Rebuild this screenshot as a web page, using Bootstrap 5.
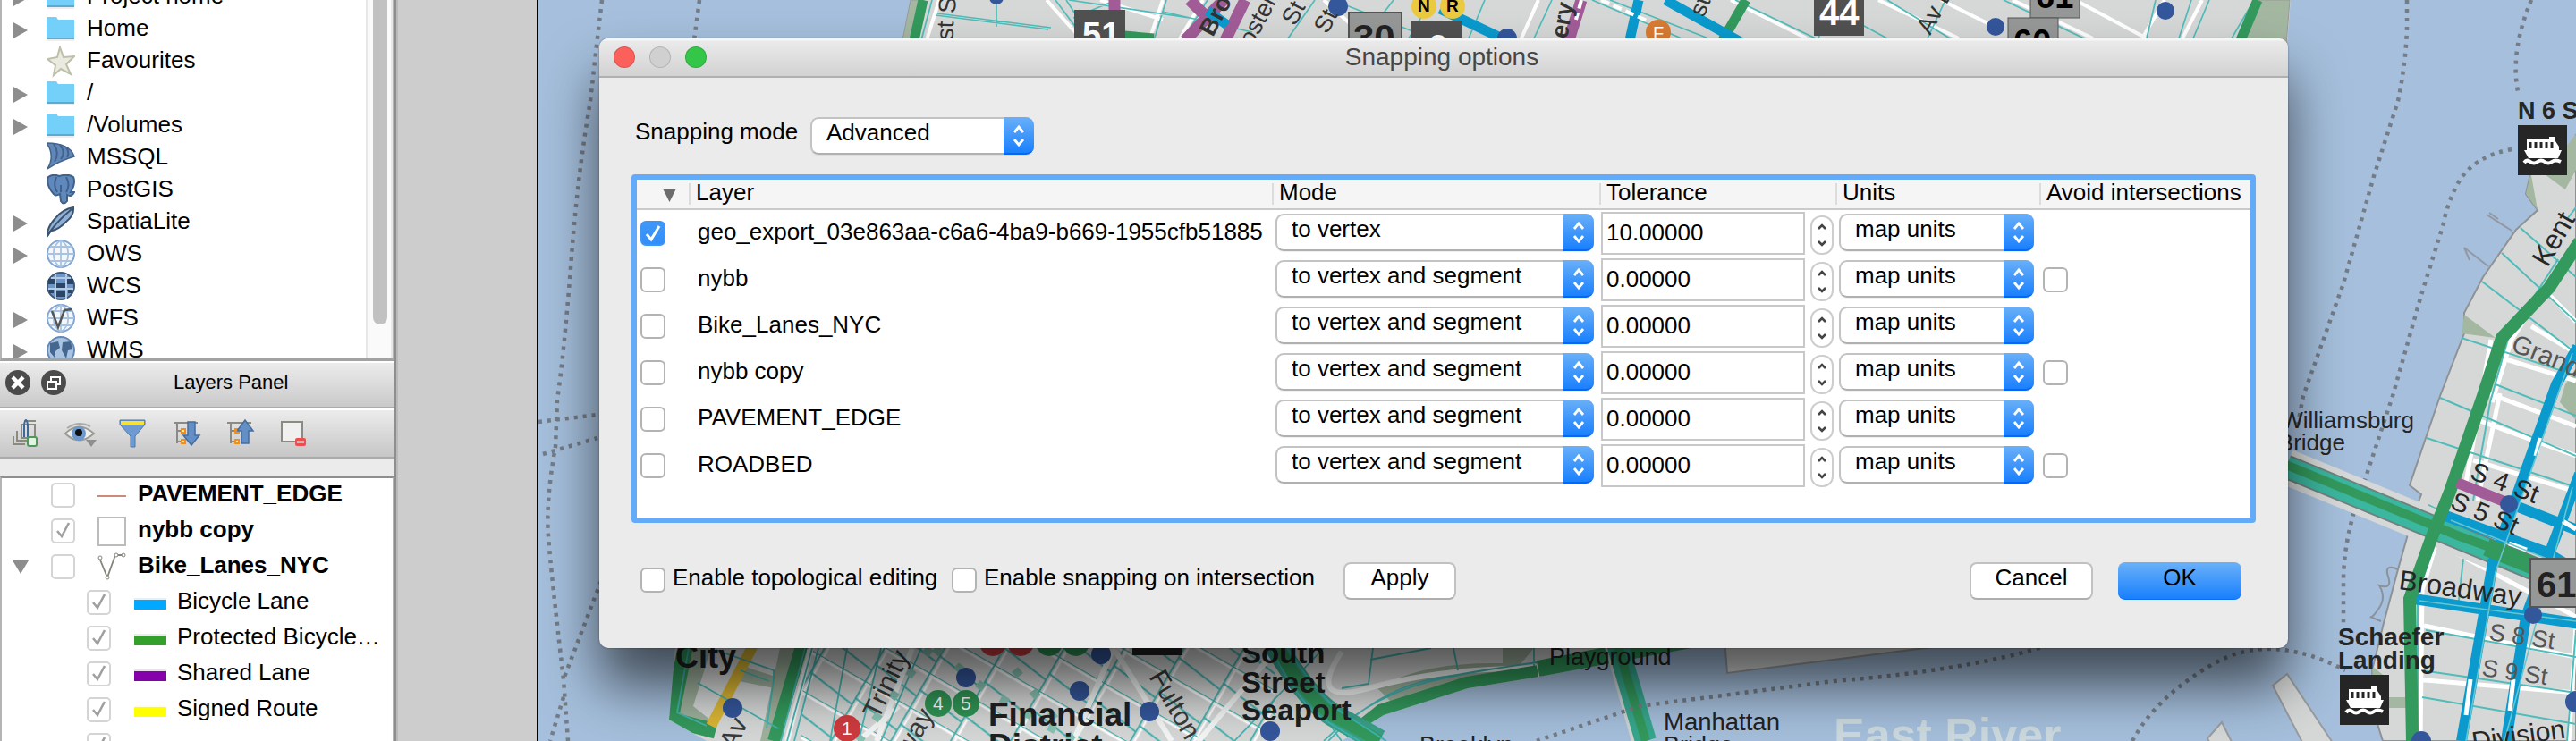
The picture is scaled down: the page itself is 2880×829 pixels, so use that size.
<!DOCTYPE html>
<html lang="en">
<head>
<meta charset="utf-8">
<title>Snapping options</title>
<link rel="stylesheet" href="https://cdn.jsdelivr.net/npm/bootstrap@5.3.0/dist/css/bootstrap.min.css">
<style>
html,body{height:829px;overflow:hidden}
body{font-family:"Liberation Sans",Arial,sans-serif;font-size:26px;line-height:32px;color:#000;background:#cdcdcd}
.dock{width:443px;background:#ebebeb;border-right:2px solid #8e8e8e;box-shadow:2px 0 0 #bababa;position:relative}
.browser{height:404px;border-left:2px solid #b4b4b4;border-right:2px solid #b4b4b4;border-bottom:3px solid #a2a2a2;background:#fff}
.browser-rows{padding-top:15px;margin-top:-36px}
.browser-row{height:36px;padding-left:13px;white-space:nowrap}
.browser-row .tri{width:16px;height:18px;margin-right:21px;position:relative;top:1px}
.browser-row .ico{width:32px;height:36px;margin-right:13px}
.browser-row span{position:relative;top:-2px}
.track{width:30px;background:#fafafa;border-left:2px solid #e7e7e7;border-right:2px solid #e7e7e7;padding-left:6px}
.thumb{width:16px;height:363px;background:#c1c1c1;border-radius:0 0 8px 8px}
.panel-title{height:53px;background:linear-gradient(#fff 0 2px,#ececec 2px,#c9c9c9);border-bottom:2px solid #ababab;font-size:22px}
.panel-title .cap{margin-left:194px;padding-bottom:3px}
.tools{height:56px;background:linear-gradient(#fff 0 2px,#ececec 2px,#c6c6c6);border-bottom:2px solid #ababab}
.gap-strip{height:20px}
.layers{border-top:2px solid #8e8e8e;border-left:2px solid #b4b4b4;border-right:2px solid #b4b4b4;background:#fff;height:296px}
.layer-row{height:40px;white-space:nowrap;position:relative;top:-1px}
.layer-row .tri{width:18px;height:16px;margin-left:12px;margin-right:25px}
.layer-row.child{padding-left:95px}
.lcb{width:27px;height:28px;border:2px solid #d4d4d4;border-radius:5px;background:#fff;flex:none}
.lcb svg{display:block;margin:2px 0 0 2px}
.sym{width:32px;height:34px;margin:0 13px 0 25px}
.swatch{width:36px;height:13px;margin:3px 12px 0 26px;border-top:2px solid #fffd}
.gutter{width:157px;background:#cdcdcd}
.canvas-map{border-left:2px solid #000;width:2280px;height:829px}
.dlg{position:absolute;left:670px;top:43px;width:1888px;height:682px;background:#ebebeb;border-radius:10px;box-shadow:0 0 2px rgba(0,0,0,.45),0 42px 62px rgba(0,0,0,.62)}
.titlebar{height:44px;border-radius:10px 10px 0 0;background:linear-gradient(#f6f6f6 0 2px,#eaeaea 3px,#d2d2d2);border-bottom:2px solid #b0b0b0;padding-left:16px;font-size:28px;color:#464646}
.light{width:24px;height:24px;border-radius:50%;border:1.5px solid #0002}
.sel{height:42px;border:2px solid #c3c3c3;border-bottom-color:#b0b0b0;border-right:0;border-radius:9px;background:#fff;padding-left:16px;line-height:32px;box-shadow:0 1px 1px #0001;white-space:nowrap}
.sel span{position:relative;top:-1px}
.sel .step{width:34px;height:42px;margin:-2px 0;background:linear-gradient(#69b0f8,#1a80fe);border-radius:0 9px 9px 0;flex:none;border-bottom:2px solid #0a66f0}
.gridbox{margin:0 36px;height:390px;border:6px solid #63aaf8;border-radius:4px;background:#fff;box-shadow:inset 0 1px 0 #4c96e6}
.g{display:grid;grid-template-columns:58px 652px 366px 264px 228px 236px}
.ghead{height:34px;background:#f5f5f5;border-bottom:2px solid #cacaca;line-height:30px}
.ghead div{border-left:2px solid #dcdcdc;height:24px;margin-top:4px;padding-left:8px;white-space:nowrap}
.ghead div span{position:relative;top:-5px;left:-2px}
.grow-row{height:52px}
.cb{width:28px;height:28px;border:2px solid #b3b3b3;border-radius:6px;background:#fff;flex:none}
.cb.on{background:linear-gradient(#3f97f6,#338ff8);border-color:#3d95f6}
.num{width:228px;height:48px;border:2px solid #c8c8c8;padding-left:4px;line-height:42px;background:#fff;margin:2px 6px 0 2px}
.spin{width:26px;height:44px;border:2px solid #cdcdcd;border-radius:12px;background:#fff;margin-top:6px}
.push{height:42px;border:2px solid #c1c1c1;border-bottom-color:#aeaeae;border-radius:8px;background:#fff;text-align:center;line-height:30px;padding:0 0 8px;font-size:26px;color:#000}
.push.main{border:0;background:linear-gradient(#6ab1f8,#1880fe);border-bottom:1px solid #0a6df2}
</style>
</head>
<body class="d-flex">
<svg width="0" height="0" class="position-absolute"><defs>
<g id="right"><path d="M0 0L16 9L0 18Z" fill="#8d8d8d"/></g>
<g id="folder"><path d="M0 5V4H11L13 7H31V29H0Z" fill="#74d0f9"/><path d="M0 27H31V29H0Z" fill="#57acd3"/><path d="M1 30H31" stroke="#ddd"/></g>
<g id="ball"><circle cx="16" cy="17" r="15" fill="#f4f8fc" stroke="#7fa6d4" stroke-width="2"/><path d="M1 17H31M4 9H28M4 25H28M16 2V32M16 2C5 8 5 26 16 32M16 2C27 8 27 26 16 32" fill="none" stroke="#a8c3e2" stroke-width="1.8"/></g>
<g id="chev"><path d="M12 17L17 11L22 17M12 25L17 31L22 25" fill="none" stroke="#fff" stroke-width="2.8"/></g>
<g id="mini"><path d="M7 13L11 9L15 13M7 27L11 31L15 27" fill="none" stroke="#444" stroke-width="2.6"/></g>
<g id="ferry"><rect width="55" height="56" fill="#262626"/><path d="M10 16H35V13H42V18L46 24V28H49L45 37H12L7 28H10Z" fill="#fff"/><path d="M14 19V26M20 19V26M26 19V26M32 19V26M38 19V26" stroke="#262626" stroke-width="3"/><path d="M7 42Q10 38 14 41T22 41T30 41T38 41T48 41" fill="none" stroke="#fff" stroke-width="4"/></g>
</defs></svg>

<aside class="dock flex-shrink-0">
  <div class="browser d-flex overflow-hidden">
    <div class="browser-rows flex-grow-1" id="tree"></div>
    <div class="track"><div class="thumb"></div></div>
  </div>
  <div class="panel-title d-flex align-items-center">
    <svg width="80" height="34" class="position-absolute">
      <circle cx="20" cy="15" r="14" fill="#4b4b4b"/><path d="M14 9L26 21M26 9L14 21" stroke="#fff" stroke-width="4.5"/>
      <circle cx="60" cy="15" r="14" fill="#4b4b4b"/><path d="M53 14H63V22H53ZM57 13V9H67V17H64" fill="none" stroke="#fff" stroke-width="2"/></svg>
    <span class="cap">Layers Panel</span>
  </div>
  <div class="tools">
    <svg width="400" height="54" viewBox="0 457 400 54">
      <g fill="none" stroke="#8a8a80" stroke-width="2"><path d="M15 488V497H28M19 482V493H30M24 475H39V490H24ZM27 471H40"/><path d="M27 489V475Q29 465 31 475V489" stroke="#3d6899" stroke-width="2"/></g><rect x="31" y="489" width="10" height="10" rx="2" fill="#e3f3e3" stroke="#4f9858" stroke-width="2"/>
      <path d="M73 485Q88 470 105 485Q88 500 73 485Z" fill="#efefec" stroke="#9b9b96" stroke-width="2"/><path d="M75 479Q88 470 101 477" fill="none" stroke="#aaa" stroke-width="2"/><circle cx="88" cy="485" r="8" fill="#6c98cc"/><circle cx="88" cy="484" r="4" fill="#111"/><path d="M96 492H108L102 500Z" fill="#8f8f8f"/>
      <path d="M134 470H162V475L151 488V500H146V488L134 475Z" fill="#6d9bd1" stroke="#5077a5" stroke-width="1"/><rect x="135" y="471" width="26" height="4" fill="#f7e233"/>
      <path d="M194 473H221M198 474V496M198 482H204M198 494H204" fill="none" stroke="#8b8b86" stroke-width="2"/><g fill="#fff0b8" stroke="#f28f1b" stroke-width="2"><rect x="203" y="480" width="4" height="4"/><rect x="203" y="492" width="4" height="4"/></g><path d="M210 472H218V487H223L214 498L205 487H210Z" fill="#638fc6" stroke="#456d9c" stroke-width="1.5"/>
      <path d="M254 473H281M258 474V496M258 482H264M258 494H264" fill="none" stroke="#8b8b86" stroke-width="2"/><g fill="#fff0b8" stroke="#f28f1b" stroke-width="2"><rect x="263" y="480" width="4" height="4"/><rect x="263" y="492" width="4" height="4"/></g><path d="M270 496H278V482H283L274 470L265 482H270Z" fill="#638fc6" stroke="#456d9c" stroke-width="1.5"/>
      <rect x="315" y="472" width="23" height="22" fill="#f0f0ee" stroke="#8b8b86" stroke-width="2"/><rect x="330" y="490" width="12" height="9" rx="2" fill="#ee4e50"/><path d="M332 494.500H340" stroke="#fff" stroke-width="2"/>
    </svg>
  </div>
  <div class="gap-strip"></div>
  <div class="layers overflow-hidden" id="layers"></div>
</aside>
<div class="gutter flex-shrink-0"></div>

<main class="canvas-map flex-shrink-0 overflow-hidden">
<svg width="2278" height="829" viewBox="602 0 2278 829" class="d-block">
<defs>
<pattern id="blk" width="58" height="44" patternUnits="userSpaceOnUse" patternTransform="rotate(30)"><path d="M0 3H58M5 0V44" stroke="#fff" stroke-width="2.5"/><path d="M0 0H58M1 0V44M0 22L58 30" stroke="#3fb2af" stroke-width="1.8"/></pattern>
<clipPath id="low"><path d="M757 700L748 805L790 829H1500L1547 800L1641 770L1721 757L1891 725V700Z"/></clipPath>
</defs>
<rect x="602" width="2278" height="829" fill="#a5bfdc"/>
<!-- upper Manhattan -->
<path d="M1020 0H2561L2556 60H1008Z" fill="#d6d8d7"/>
<path d="M1018 0H1032L1022 50H1008ZM2526 0H2560L2556 50H2505Z" fill="#a3b7a1" stroke="#999"/>
<path d="M1050 0L1036 45M1170 0L1210 45M1230 0L1300 22M1300 0L1285 45M1345 0L1318 45M1480 0L1530 45M1720 0L1700 45M1935 0L2020 43M2100 0L2190 43M2170 0L2230 30M2250 0L2340 43M2320 0L2400 43M2420 0L2395 43M2462 0L2440 43" stroke="#fff" stroke-width="4" fill="none"/>
<path d="M1042 0L1030 45M1048 15L1175 31M1046 17L1172 33M1114 0V30M1180 0L1212 43M1192 0L1220 43M1195 0L1330 20M1248 0L1200 20M1304 0L1290 45M1350 0L1322 45M1300 13L1400 36M1470 0L1440 43M1490 0L1600 43M1558 0L1525 43M1600 0L1575 43M1660 0L1642 43M1735 0L1715 43M1780 0L1880 43M1800 0L1910 43M1940 0L2030 43M2030 0L2110 43M2110 0L2180 43M2050 0L2033 43M2175 0L2155 43M2240 0L2330 43M2410 0L2400 43M2450 0L2436 43M2470 0L2452 43M2520 0L2495 43" stroke="#4fbcb9" stroke-width="1.7" fill="none"/>
<path d="M1032 0L1022 45M1952 0L1926 45M2524 0L2505 45M1257 40L1290 43" stroke="#33995c" stroke-width="11"/>
<path d="M1246 0V24M1368 0L1325 45M1330 0L1350 20M1392 0L1370 45M1768 0L1754 45" stroke="#a15c97" stroke-width="13"/>
<path d="M1350 12L1372 28M1610 10L1690 48M1832 0L1822 45M1862 0L1948 48" stroke="#0a9ace" stroke-width="11" fill="none"/>
<path d="M1790 0L1870 36M1768 0L1762 22" stroke="#fff" stroke-width="4" stroke-dasharray="10 5"/>
<g fill="#34569b"><circle cx="1114" cy="-3" r="8"/><circle cx="1496" cy="7" r="11"/><circle cx="1685" cy="43" r="11"/><circle cx="2231" cy="30" r="10"/><circle cx="2421" cy="12" r="10"/></g>
<rect x="1201" y="11" width="57" height="36" fill="#515151"/><text x="1210" y="52" font-size="38" font-weight="700" fill="#fff">51</text>
<rect x="1508" y="14" width="59" height="36" fill="#969797" stroke="#555" stroke-width="2"/><text x="1513" y="57" font-size="42" font-weight="700" fill="#222">30</text>
<rect x="1578" y="24" width="56" height="30" fill="#515151"/><text x="1596" y="67" font-size="40" font-weight="700" fill="#fff">6</text>
<circle cx="1592" cy="7" r="14" fill="#ecca3f"/><circle cx="1624" cy="7" r="14" fill="#ecca3f"/><text x="1585" y="13" font-size="19" font-weight="700">N</text><text x="1617" y="13" font-size="19" font-weight="700">R</text>
<circle cx="1854" cy="36" r="14" fill="#d87b34"/><text x="1848" y="44" font-size="20" fill="#fff">F</text>
<rect x="2028" y="-2" width="56" height="42" fill="#515151"/><text x="2034" y="28" font-size="40" font-weight="700" fill="#fff">44</text>
<rect x="2270" y="-2" width="55" height="22" fill="#969797" stroke="#555"/><text x="2276" y="9" font-size="38" font-weight="700">61</text>
<rect x="2245" y="20" width="56" height="30" fill="#969797" stroke="#555"/><text x="2251" y="60" font-size="38" font-weight="700">60</text>
<g font-size="27" fill="#333"><text transform="translate(1068 15) rotate(-88)">St</text><text transform="translate(1065 60) rotate(-88)">est</text><text transform="translate(1356 42) rotate(-62)" font-weight="700">Broo</text><text transform="translate(1400 53) rotate(-62)">oster</text><text transform="translate(1448 30) rotate(-62)">St</text><text transform="translate(1484 39) rotate(-62)">St</text><text transform="translate(1752 44) rotate(-80)" font-weight="700">ery</text><text transform="translate(2158 40) rotate(-62)">Av B</text><text transform="translate(1905 20) rotate(-68)">st</text></g>

<!-- lower Manhattan -->
<path d="M757 700L748 805L790 829H1500L1547 800L1641 770L1721 757L1891 725V700Z" fill="#d6d8d7"/>
<g clip-path="url(#low)">
<rect x="895" y="720" width="530" height="110" fill="url(#blk)"/>
<path d="M775 725H795L775 790L800 810L790 820L755 800ZM830 745L870 758L866 770L826 762ZM890 725L866 829H850L872 725ZM1540 770Q1590 740 1680 742V725H1715L1690 755L1560 790Z" fill="#9fb19d"/>
<path d="M767 720L750 805L800 818" fill="none" stroke="#33995c" stroke-width="17"/><path d="M897 720L865 829" stroke="#33995c" stroke-width="14"/>
<path d="M843 720L795 812" stroke="#dcb734" stroke-width="12"/>
<path d="M908 720L880 829M1005 790L960 829M1020 725L980 829M1200 829L1245 725L1310 829M1340 829L1420 735M1500 729Q1460 790 1530 770T1690 748T1880 722" fill="none" stroke="#f4f6f6" stroke-width="6"/>
<path d="M770 725L757 797L790 812M780 764L870 815M800 727L865 750V760L857 815M828 750L860 762M900 725L873 829M908 725L880 829M915 725L888 829M947 725L928 829M985 725L960 829M1030 725L985 829M1480 829Q1530 780 1600 762T1860 725M1485 829Q1540 770 1610 758T1860 720M1535 725L1530 765L1500 770M1532 738L1600 725M1625 725L1630 750M1715 725V745M1425 725L1500 829M1440 725L1510 829M1380 829L1480 725" fill="none" stroke="#46b4b1" stroke-width="1.8"/>
<path d="M1720 757L1641 770L1547 800L1510 829" fill="none" stroke="#33995c" stroke-width="26"/><path d="M1891 716L1720 750" stroke="#33995c" stroke-width="22"/>
<path d="M1040 725L960 829M1045 725L1100 770L1200 829M1115 725L1200 829" fill="none" stroke="#88c3b4" stroke-width="9" stroke-dasharray="9 22"/>
</g>
<path d="M1425 720Q1460 780 1490 800L1542 829" fill="none" stroke="#3aa088" stroke-width="26"/><path d="M1425 720Q1460 780 1490 800L1542 829" fill="none" stroke="#33995c" stroke-width="14"/><path d="M1436 720Q1470 775 1500 797L1550 829M1418 720Q1450 785 1480 805L1520 829" fill="none" stroke="#3bb6b0" stroke-width="2"/>
<path d="M1797 720L1828 829" stroke="#ced3d1" stroke-width="8"/><path d="M1808 720L1840 829" stroke="#37a68d" stroke-width="24"/><path d="M1808 720L1840 829" stroke="#33995c" stroke-width="10"/>
<g fill="#34569b"><circle cx="819" cy="792" r="11"/><circle cx="1080" cy="758" r="11"/><circle cx="1207" cy="773" r="11"/><circle cx="1231" cy="732" r="11"/><circle cx="1285" cy="796" r="11"/><circle cx="1420" cy="818" r="11"/></g>
<g fill="#cf3b3f"><circle cx="947" cy="815" r="15"/><circle cx="1110" cy="719" r="15"/><circle cx="1141" cy="719" r="15"/></g><g fill="#2f9454"><circle cx="1049" cy="787" r="15"/><circle cx="1080" cy="787" r="15"/><circle cx="1173" cy="719" r="15"/><circle cx="1203" cy="719" r="15"/></g>
<g fill="#fff" font-size="21"><text x="941" y="822">1</text><text x="1043" y="794">4</text><text x="1074" y="794">5</text></g>
<rect x="1266" y="700" width="56" height="33" fill="#222"/>
<g fill="#202020" font-weight="700"><text x="755" y="747" font-size="36">City</text><text x="1105" y="812" font-size="37">Financial</text><text x="1105" y="847" font-size="37">District</text><g font-size="33"><text x="1388" y="742">South</text><text x="1388" y="775">Street</text><text x="1388" y="806">Seaport</text></g></g>
<g fill="#3a3a3a" font-size="30"><text transform="translate(982 806) rotate(-64)">Trinity</text><text transform="translate(1284 757) rotate(60)">Fulton</text><text transform="translate(1018 846) rotate(-60)">way</text><text transform="translate(822 840) rotate(-65)">Av</text></g>
<g fill="#222"><text x="1732" y="744" font-size="27">Playground</text><text x="1587" y="843" font-size="27">Brooklyn</text><text x="1860" y="817" font-size="27.500">Manhattan</text><text x="1860" y="843" font-size="27">Bridge</text></g>

<!-- piers and ferry routes -->
<g fill="#d6d8d7" stroke="#9a9da0" stroke-width="2"><path d="M1927 700L1931 753L2160 724V700ZM2557 754L2541 767L2579 840H2614ZM2484 808L2468 826L2475 840H2500Z"/></g>
<g fill="none" stroke="#747c86" stroke-width="4.500" stroke-dasharray="4 6"><path d="M673 0L669 33L660 113Q645 200 638 300Q630 400 623 447L621 500Q610 560 613 600T630 760L635 829M782 0L776 45M602 472L668 464M607 508L668 490M672 650L630 760M630 780L615 829M2691 0L2691 30Q2690 70 2681 113L2654 197L2620 317L2575 443L2568 480M2830 0Q2805 60 2816 107M2808 167Q2765 175 2748 205Q2735 230 2732 250L2707 330L2675 443L2643 540Q2620 600 2620 650V697M2384 829Q2410 780 2474 743T2622 750M2290 722Q2200 750 2050 762L1833 790L1700 835"/></g>
<text x="2050" y="840" font-size="52" font-weight="700" fill="#ccdadf">East River</text>

<!-- Williamsburg -->
<path d="M2880 150L2870 195H2829L2824 217L2837 235L2813 257L2776 310L2755 350V373L2728 443L2694 543L2707 553L2697 580L2681 637L2665 697L2652 750L2654 797L2664 829H2880Z" fill="#d6d8d7" stroke="#8f9295" stroke-width="2"/>
<path d="M2829 195L2824 217L2837 235L2830 196ZM2845 195L2868 212L2880 190V150ZM2755 352L2790 378L2752 373ZM2652 745L2664 755V762H2653ZM2668 780H2692V792H2668ZM2868 430L2880 412V470L2862 450Z" fill="#a3b7a1"/>
<path d="M2780 240L2808 258M2783 238L2793 245M2755 277L2782 298M2755 277L2761 291" stroke="#9299a3" stroke-width="2" fill="none"/>
<path d="M2681 637Q2665 630 2670 645T2660 655Q2668 668 2660 680T2650 690L2662 695" fill="none" stroke="#8b929c" stroke-width="2"/>
<g fill="none" stroke="#fff" stroke-width="5"><path d="M2850 330L2880 360M2830 365L2880 395M2795 400L2880 426M2782 440L2880 477M2770 470L2880 510M2765 515L2880 550M2720 605L2880 690M2710 700L2880 735M2700 760L2880 775M2785 380L2757 540M2860 300L2808 380L2786 450M2735 570L2708 660L2706 829M2795 440L2770 560M2880 700L2872 829"/></g>
<g fill="none" stroke="#4fbcb9" stroke-width="2"><path d="M2818 255L2880 310M2797 283L2880 360M2775 315L2880 395M2752 378L2880 420M2728 445L2880 510M2713 490L2880 545M2790 430L2880 465M2715 565L2880 650M2703 600L2880 675M2712 705L2880 735M2707 750L2880 775M2708 780L2880 810M2860 290L2805 375L2784 450L2765 560M2735 570L2703 665V829M2754 625L2748 680M2880 705L2870 829M2880 232L2870 245"/></g>
<path d="M2556 522L2830 635L2890 660" fill="none" stroke="#d6d8d7" stroke-width="40"/><path d="M2556 522L2830 635L2890 660" fill="none" stroke="#70817f" stroke-width="27"/><path d="M2556 522L2830 635L2890 660" fill="none" stroke="#3bb69f" stroke-width="23"/>
<g fill="none" stroke="#0a9ace" stroke-width="12"><path d="M2882 388L2858 430L2787 630L2752 829M2884 530L2850 620L2824 690L2802 829M2734 577L2845 617L2884 640M2805 563L2884 594M2699 670L2884 698"/></g>
<path d="M2556 520L2750 600L2890 650" fill="none" stroke="#33995c" stroke-width="10"/><path d="M2780 612L2840 636" stroke="#33995c" stroke-width="20"/>
<path d="M2884 270L2850 322L2797 378L2776 443L2739 550L2718 603L2694 670L2697 829" fill="none" stroke="#33995c" stroke-width="14"/>
<path d="M2747 540L2805 563" stroke="#a15c97" stroke-width="12"/>
<path d="M2840 490L2835 510M2762 760L2757 800M2810 760L2806 795M2805 608L2825 615M2865 583L2880 592" stroke="#fff" stroke-width="5"/>
<path d="M2876 395L2790 640L2757 829M2876 545L2800 829M2740 582L2880 638M2705 672L2880 695" fill="none" stroke="#66c6d0" stroke-width="1.600"/>
<g fill="#34569b"><circle cx="2805" cy="564" r="10"/><circle cx="2832" cy="688" r="10"/><circle cx="2880" cy="785" r="12"/><circle cx="2707" cy="829" r="11"/></g>
<rect x="2829" y="625" width="55" height="54" fill="#969797" stroke="#555" stroke-width="2"/><text x="2836" y="668" font-size="40" font-weight="700" fill="#222">61</text>
<use href="#ferry" x="2815" y="140"/><use href="#ferry" x="2616" y="755"/>
<g fill="#262626"><text x="2815" y="133" font-size="27" font-weight="700">N 6 St</text><text x="2699" y="479" font-size="26" text-anchor="end">Williamsburg</text><text x="2622" y="504" font-size="26" text-anchor="end">Bridge</text><g font-weight="700" font-size="28"><text x="2614" y="722">Schaefer</text><text x="2614" y="748">Landing</text></g>
<text transform="translate(2848 300) rotate(-60)" font-size="31">Kent</text><text transform="translate(2806 392) rotate(22)" font-size="29" fill="#555">Grand</text>
<text transform="translate(2760 535) rotate(21)" font-size="29">S 4 St</text><text transform="translate(2738 568) rotate(23)" font-size="29">S 5 St</text><text transform="translate(2681 659) rotate(8)" font-size="31">Broadway</text><g fill="#555"><text transform="translate(2782 716) rotate(8)" font-size="27">S 8 St</text><text transform="translate(2774 756) rotate(8)" font-size="27">S 9 St</text></g><text transform="translate(2765 840) rotate(-8)" font-size="30">Division</text></g>
</svg>
</main>

<section class="dlg">
  <div class="titlebar d-flex align-items-center position-relative">
    <div class="d-flex gap-3 position-relative">
      <div class="light" style="background:#fc605b"></div><div class="light" style="background:#d0d0d0"></div><div class="light" style="background:#34c648"></div>
    </div>
    <div class="position-absolute start-0 end-0 text-center" style="padding-right:4px">Snapping options</div>
  </div>
  <div class="d-flex align-items-start" style="padding:44px 0 0 40px;height:108px">
    <div style="width:196px">Snapping mode</div>
    <div class="sel d-flex justify-content-between" style="width:250px"><span>Advanced</span><div class="step"><svg width="34" height="42" class="d-block"><use href="#chev"/></svg></div></div>
  </div>
  <div class="gridbox">
    <div class="g ghead"><svg width="58" height="32"><path d="M29 10H44L36.500 25Z" fill="#6c6c6c"/></svg><div><span>Layer</span></div><div><span>Mode</span></div><div><span>Tolerance</span></div><div><span>Units</span></div><div><span>Avoid intersections</span></div></div>
    <div id="rows"></div>
  </div>
  <div class="d-flex align-items-start" style="padding:44px 52px 0 46px">
    <div class="cb" style="margin-top:6px"></div><div style="width:320px;padding:1px 0 0 8px;white-space:nowrap">Enable topological editing</div>
    <div class="cb" style="margin-top:6px"></div><div style="width:410px;padding:1px 0 0 8px;white-space:nowrap">Enable snapping on intersection</div>
    <button class="push" style="width:126px">Apply</button>
    <button class="push ms-auto" style="width:138px">Cancel</button>
    <button class="push main" style="width:138px;margin-left:28px">OK</button>
  </div>
</section>

<script src="https://cdn.jsdelivr.net/npm/bootstrap@5.3.0/dist/js/bootstrap.bundle.min.js"></script>
<script>
const folder='<use href="#folder"/>', ball='<use href="#ball"/>';
const tree=[
 [1,'Project home',folder],[1,'Home',folder],
 [0,'Favourites','<path d="M15 2L19 13L31 12L22 21L27 32L16 26L8 33L10 22L1 15L12 13Z" fill="#eaeae0" stroke="#bdbfa8" stroke-width="2"/>'],
 [1,'/',folder],[1,'/Volumes',folder],
 [0,'MSSQL','<path d="M0 1Q26 1 31 16Q14 21 1 30Q10 15 0 1Z" fill="#6187b8" stroke="#43638b" stroke-width="1.5"/><path d="M8 2Q15 12 9 22M15 3Q22 12 16 19M22 6Q26 12 23 17" fill="none" stroke="#3f6290" stroke-width="2"/>'],
 [0,'PostGIS','<path d="M2 3Q8 -1 14 2Q24 -1 30 3Q33 10 27 20H31Q28 26 23 23V30Q19 35 16 30L15 22Q10 25 8 22Q-1 12 2 3Z" fill="#5f89bd" stroke="#3f618a" stroke-width="2"/><path d="M11 3Q7 12 12 20M22 3Q27 12 22 20M16 12V20" fill="none" stroke="#3f618a" stroke-width="2"/>'],
 [1,'SpatiaLite','<path d="M1 33Q0 24 10 13Q18 3 30 1Q31 10 22 17Q12 27 5 27Z" fill="#8fb0d6" stroke="#3c536e" stroke-width="2"/><path d="M1 33Q8 20 28 3" fill="none" stroke="#3c536e" stroke-width="2"/>'],
 [1,'OWS',ball],
 [0,'WCS','<circle cx="16" cy="17" r="15" fill="#6e97c8" stroke="#3f5877" stroke-width="2"/><path d="M2 12H10M22 12H30M11 17H21M9 26H23M3 22H8M24 22H29" stroke="#2c4565" stroke-width="6"/><path d="M2 20H30M5 8H27M10 3V31M22 3V31" stroke="#b4cbe5" stroke-width="2"/>'],
 [1,'WFS',ball+'<path d="M6 9L13 27L20 8L29 7" fill="none" stroke="#555" stroke-width="2.5"/>'],
 [1,'WMS','<circle cx="16" cy="17" r="15" fill="#a9c4e2" stroke="#6288b5" stroke-width="2"/><path d="M4 9L13 7L15 14L10 18L9 25L4 19ZM18 8L27 7L29 16L24 17L22 26L17 17Z" fill="#45668f"/>']];
document.getElementById('tree').innerHTML=tree.map(r=>`<div class="browser-row d-flex align-items-center"><svg class="tri">${r[0]?'<use href="#right"/>':''}</svg><svg class="ico">${r[2]}</svg><span>${r[1]}</span></div>`).join('');
const tick='<svg width="20" height="20"><path d="M3 10L8 16L16 1" fill="none" stroke="#a0a0a0" stroke-width="2.6"/></svg>';
const box=c=>`<div class="lcb">${c?tick:''}</div>`;
const tops=[[0,0,'PAVEMENT_EDGE','<path d="M0 18H32" stroke="#cb8b78" stroke-width="2"/>'],[0,1,'nybb copy','<rect x="1" y="2" width="30" height="31" fill="none" stroke="#bcbcbc" stroke-width="2"/>'],[1,0,'Bike_Lanes_NYC','<path d="M2 7L11 29L20 4H30" fill="none" stroke="#85857c" stroke-width="1.800"/><g fill="#fff" stroke="#85857c"><circle cx="3" cy="7" r="2"/><circle cx="11" cy="29" r="2"/><circle cx="21" cy="4" r="2"/><circle cx="29" cy="4" r="2"/></g>']];
const kids=[['Bicycle Lane','#00a8ff'],['Protected Bicycle…','#33a02c'],['Shared Lane','#8300aa'],['Signed Route','#ffff00'],['','#fff']];
document.getElementById('layers').innerHTML=tops.map(r=>`<div class="layer-row d-flex align-items-center"><svg class="tri">${r[0]?'<path d="M0 1H18L9 16Z" fill="#8d8d8d"/>':''}</svg>${box(r[1])}<svg class="sym">${r[3]}</svg><b class="pb-1">${r[2]}</b></div>`).join('')+kids.map(k=>`<div class="layer-row child d-flex align-items-center">${box(1)}<div class="swatch" style="background:${k[1]}"></div><span class="pb-1">${k[0]}</span></div>`).join('');
const sel=(t,w)=>`<div class="sel d-flex justify-content-between" style="width:${w}px;margin:4px 0 0 4px"><span>${t}</span><div class="step"><svg width="34" height="42" class="d-block"><use href="#chev"/></svg></div></div>`;
const names=['geo_export_03e863aa-c6a6-4ba9-b669-1955cfb51885','nybb','Bike_Lanes_NYC','nybb copy','PAVEMENT_EDGE','ROADBED'];
document.getElementById('rows').innerHTML=names.map((n,i)=>`<div class="g grow-row"><div style="padding:12px 0 0 4px"><div class="cb ${i?'':'on'}">${i?'':'<svg width="24" height="24" class="d-block"><path d="M5 13L10 19L19 4" fill="none" stroke="#fff" stroke-width="3"/></svg>'}</div></div><div style="padding:8px 0 0 10px;white-space:nowrap">${n}</div><div>${sel(i?'to vertex and segment':'to vertex',356)}</div><div class="d-flex align-items-start"><div class="num">${i?'0.00000':'10.00000'}</div><svg class="spin"><use href="#mini"/></svg></div><div>${sel('map units',218)}</div><div style="padding:12px 0 0 4px">${i%2?'<div class="cb"></div>':''}</div></div>`).join('');
</script>
</body>
</html>
